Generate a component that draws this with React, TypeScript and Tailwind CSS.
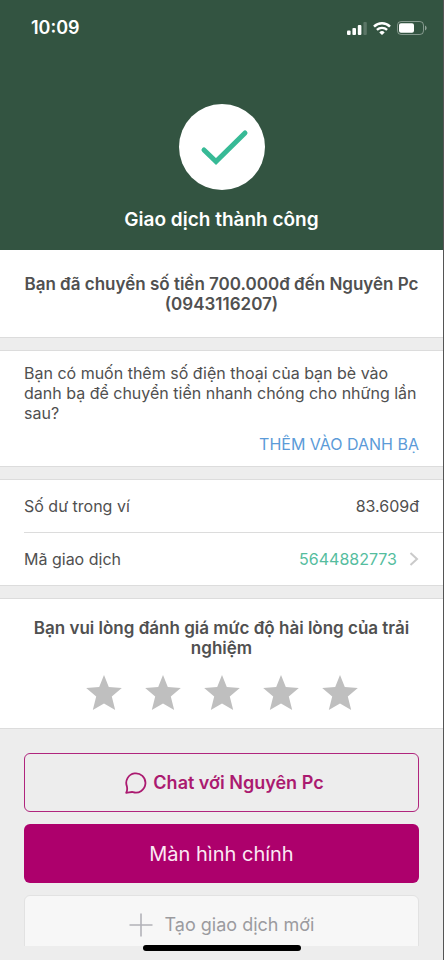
import type { ReactNode } from "react";

function SignalIcon() {
  return (
    <svg width="20" height="13" viewBox="0 0 20 13" fill="#fff" aria-hidden="true">
      <rect x="0" y="8.6" width="3.6" height="4.4" rx="1" />
      <rect x="5.4" y="6" width="3.6" height="7" rx="1" />
      <rect x="10.8" y="3" width="3.6" height="10" rx="1" />
      <rect x="16.4" y="0" width="3.4" height="13" rx="1" opacity="0.2" />
    </svg>
  );
}

function WifiIcon() {
  return (
    <svg width="18" height="13" viewBox="0 0 18 13" fill="none" aria-hidden="true">
      <path d="M1 4.6a11.4 11.4 0 0 1 16 0" stroke="#fff" strokeWidth="2.5" />
      <path d="M3.9 7.9a7.3 7.3 0 0 1 10.2 0" stroke="#fff" strokeWidth="2.3" />
      <path d="M9 13 6.3 10.4a3.9 3.9 0 0 1 5.4 0Z" fill="#fff" />
    </svg>
  );
}

function BatteryIcon() {
  return (
    <svg width="30" height="14" viewBox="0 0 30 14" fill="none" aria-hidden="true">
      <rect x="0.5" y="0.5" width="26" height="13" rx="3.6" stroke="#fff" strokeOpacity="0.4" />
      <rect x="2" y="2.2" width="15" height="9.6" rx="2" fill="#fff" />
      <path d="M28 4.6c1.1.5 1.6 1.4 1.6 2.4s-.5 1.9-1.6 2.4Z" fill="#fff" fillOpacity="0.45" />
    </svg>
  );
}

function Section({ children, className = "" }: { children: ReactNode; className?: string }) {
  return <section className={`border-b border-[#dcdcdc] bg-white ${className}`}>{children}</section>;
}

function Rating() {
  return (
    <fieldset>
      <legend className="w-full text-center text-[17px] leading-5 font-semibold">
        Bạn vui lòng đánh giá mức độ hài lòng của trải nghiệm
      </legend>
      <div className="mt-4 flex justify-center gap-[23px]">
        {[1, 2, 3, 4, 5].map((value) => (
          <label key={value} className="relative cursor-pointer" aria-label={`${value} sao`}>
            <input type="radio" name="rating" value={value} className="sr-only" />
            <svg width="36" height="36" viewBox="0 0 36 36" fill="#bfbfbf" aria-hidden="true">
              <path d="M18 1 22.8 13 35.8 14 25.8 22.4 29.2 36 18 29.4 6.8 36 10.2 22.4 .2 14 13.2 13Z" />
            </svg>
          </label>
        ))}
      </div>
    </fieldset>
  );
}

export default function App() {
  return (
    <div className="relative flex h-screen flex-col overflow-hidden border-r border-[#555] bg-[#ededed] font-['Inter','Noto_Sans',sans-serif] text-base leading-5 text-[#505050]">
      <header className="flex flex-col items-center bg-[#335441] pb-4 text-white">
        <div className="flex w-full items-center justify-between py-4 pr-4 pl-[31px]">
          <span className="text-lg leading-6 font-semibold">10:09</span>
          <div className="flex items-center gap-1.5">
            <SignalIcon />
            <WifiIcon />
            <BatteryIcon />
          </div>
        </div>
        <div className="mt-12 flex size-[86px] items-center justify-center rounded-full bg-white">
          <svg width="86" height="86" viewBox="0 0 86 86" fill="none" aria-hidden="true">
            <path
              d="M25 46 37 57.5 66 29"
              stroke="#37ba96"
              strokeWidth="5"
              strokeLinecap="round"
              strokeLinejoin="miter"
            />
          </svg>
        </div>
        <h1 className="mt-4 text-[19px] leading-7 font-semibold">Giao dịch thành công</h1>
      </header>

      <main className="flex min-h-0 flex-1 flex-col gap-3 overflow-hidden">
        <Section className="px-5 pt-6 pb-[23px]">
          <p className="text-center text-[17px] leading-5 font-semibold">
            Bạn đã chuyển số tiền 700.000đ đến Nguyên Pc (0943116207)
          </p>
        </Section>

        <Section className="border-t px-6 py-3">
          <p>
            Bạn có muốn thêm số điện thoại của bạn bè vào danh bạ để chuyển tiền nhanh chóng cho những lần sau?
          </p>
          <div className="mt-[11px] flex justify-end">
            <button type="button" className="text-[#5b9bd8]">
              THÊM VÀO DANH BẠ
            </button>
          </div>
        </Section>

        <Section className="border-t pl-6">
          <div className="flex h-[53px] items-center justify-between border-b border-[#dcdcdc] pr-6">
            <span>Số dư trong ví</span>
            <span>83.609đ</span>
          </div>
          <div className="flex h-[52px] items-center justify-between pr-6">
            <span>Mã giao dịch</span>
            <a href="#transaction" className="flex items-center gap-3 text-[#55bd9e]">
              5644882773
              <svg width="10" height="14" viewBox="0 0 10 14" fill="none" aria-hidden="true">
                <path d="M1.5 1 8 7 1.5 13" stroke="#cacaca" strokeWidth="2" />
              </svg>
            </a>
          </div>
        </Section>

        <Section className="border-t px-5 pt-[19px] pb-[18px]">
          <Rating />
        </Section>

        <div className="mt-3 flex flex-col gap-3 px-6">
          <button
            type="button"
            className="flex h-[59px] items-center justify-center gap-1.5 rounded-md border border-[#b0257d] pl-1.5 text-lg font-semibold text-[#ab1a70]"
          >
            <svg width="22" height="22" viewBox="0 0 22 22" fill="none" aria-hidden="true">
              <path
                d="M1.2 20.8C2.6 18.4 2.4 16.8 1.9 14.4A9.6 9.6 0 1 1 8 20.1C6 19.7 4 20.6 1.2 20.8Z"
                stroke="#ab1a70"
                strokeWidth="1.8"
                strokeLinejoin="round"
              />
            </svg>
            Chat với Nguyên Pc
          </button>
          <button type="button" className="h-[59px] rounded-md bg-[#ad006c] text-xl text-[#fbe9f4]">
            Màn hình chính
          </button>
          <button
            type="button"
            className="flex h-[59px] items-center justify-center gap-3 rounded-md border border-[#e2e2e2] bg-[#f7f7f7] text-lg text-[#9b9b9f]"
          >
            <svg width="24" height="24" viewBox="0 0 24 24" fill="none" aria-hidden="true">
              <path d="M12 0.5v23M0.5 12h23" stroke="#b2b2b8" strokeWidth="1.6" />
            </svg>
            Tạo giao dịch mới
          </button>
        </div>
      </main>

      <footer className="h-[14px] shrink-0">
        <div className="absolute bottom-[9px] left-1/2 h-[6px] w-[158px] -translate-x-1/2 rounded-full bg-black" />
      </footer>
    </div>
  );
}
